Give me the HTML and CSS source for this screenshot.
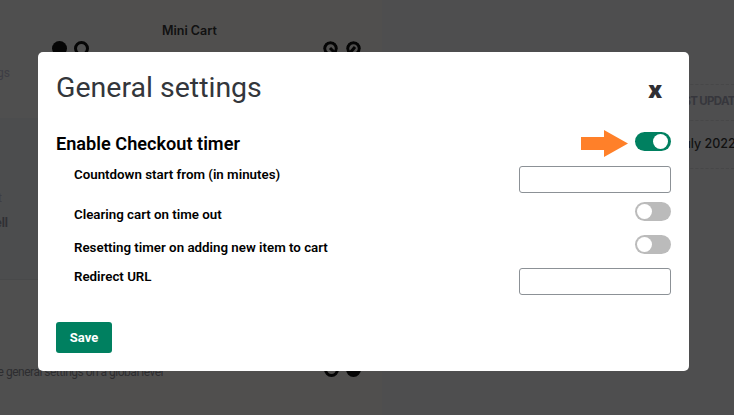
FILE: index.html
```html
<!DOCTYPE html>
<html lang="en">
<head>
<meta charset="utf-8">
<title>General settings</title>
<link rel="stylesheet" href="styles.css">
</head>
<body>
<div class="page">
  <div class="backdrop">
    <aside class="side">
      <div class="side-top">
        <div class="side-text side-first"><span>Settings</span></div>
      </div>
      <div class="side-mid">
        <div class="side-text side-second"><span>Cart</span></div>
        <div class="side-text side-third"><span>Upsell</span></div>
      </div>
    </aside>
    <main class="center">
      <div class="cart-head">
        <div class="cart-dots">
          <span class="dot solid"></span>
          <span class="dot ring"></span>
        </div>
        <div class="cart-title">Mini Cart</div>
        <div class="cart-dots cart-dots-right">
          <svg class="dot" viewBox="0 0 15 15"><circle cx="7.500" cy="7.500" r="5.800" fill="none" stroke="#050505" stroke-width="3"/><path d="M7 7l6 6" stroke="#050505" stroke-width="3" fill="none"/></svg>
          <svg class="dot" viewBox="0 0 15 15"><circle cx="7.500" cy="7.500" r="5.800" fill="none" stroke="#050505" stroke-width="3"/><path d="M9 6l-6 7" stroke="#050505" stroke-width="3" fill="none"/></svg>
        </div>
      </div>
      <div class="cart-foot">
        <div class="foot-text"><span>Manage the general settings on a global level</span></div>
        <div class="cart-dots foot-dots">
          <span class="dot ring"></span>
          <span class="dot solid"></span>
        </div>
      </div>
    </main>
    <section class="info">
      <div class="info-row info-head">LAST UPDATED</div>
      <div class="info-row info-date">July 2022</div>
    </section>
  </div>

  <div class="modal">
    <header class="modal-head">
      <h1 class="modal-title">General settings</h1>
      <span class="modal-close">x</span>
    </header>
    <div class="main-row">
      <span class="main-label">Enable Checkout timer</span>
      <div class="main-control">
        <svg class="arrow" width="47" height="27" viewBox="0 0 47 27"><path d="M0 7H23V0L47 13.500 23 27V20H0Z" fill="#ff8029"/></svg>
        <span class="switch on"></span>
      </div>
    </div>
    <div class="rows">
      <div class="row row-one">
        <span class="row-label">Countdown start from (in minutes)</span>
        <input class="field" type="text">
      </div>
      <div class="row row-two">
        <span class="row-label">Clearing cart on time out</span>
        <span class="switch"></span>
      </div>
      <div class="row row-three">
        <span class="row-label">Resetting timer on adding new item to cart</span>
        <span class="switch"></span>
      </div>
      <div class="row row-four">
        <span class="row-label">Redirect URL</span>
        <input class="field" type="text">
      </div>
    </div>
    <button class="save" type="button">Save</button>
  </div>
</div>
</body>
</html>
```
FILE: styles.css
```css
* { box-sizing: border-box; }
html, body { margin: 0; padding: 0; }
body { font-family: Roboto, sans-serif; background: #4f4f4f; }

.page {
  position: relative;
  width: 734px;
  height: 415px;
  overflow: hidden;
  background: #4f4f4f;
}

/* dimmed page behind the dialog */
.backdrop {
  display: flex;
  height: 415px;
  font-family: Inter, sans-serif;
  color: #111;
}
.side {
  width: 110px;
  flex: none;
  background: #4f4f4f;
}
.side-top { height: 118px; padding-top: 65px; }
.side-mid {
  height: 162px;
  padding-top: 72px;
  background: #4c4d4e;
  border-bottom: 1px solid #48494a;
}
.side-text {
  display: flex;
  justify-content: flex-end;
  overflow: hidden;
  white-space: nowrap;
  font-family: Roboto, sans-serif;
  font-size: 12px;
  line-height: 16px;
}
.side-first { width: 10px; color: #3d3d44; }
.side-second { width: 2px; color: #3d3d44; }
.side-third { width: 8px; margin-top: 9px; font-weight: 700; color: #303034; }

.center {
  width: 272px;
  flex: none;
  display: flex;
  flex-direction: column;
  justify-content: space-between;
  background: #504f4e;
}
.cart-head { display: flex; padding-top: 23px; margin-left: -58px; }
.cart-dots { display: flex; gap: 7px; }
.cart-head > .cart-dots { margin-top: 18px; }
.cart-title {
  margin-left: 73px;
  font-size: 12.500px;
  line-height: 16px;
  font-weight: 600;
  white-space: nowrap;
}
.cart-head > .cart-dots-right { margin-left: 106px; gap: 8px; }
.dot { display: block; width: 15px; height: 15px; border-radius: 50%; flex: none; }
.solid { background: #050505; }
.ring { border: 3px solid #050505; }

.cart-foot { display: flex; height: 53px; margin-left: -110px; }
.foot-text {
  width: 163px;
  height: 16px;
  margin-top: 2px;
  display: flex;
  justify-content: flex-end;
  overflow: hidden;
  white-space: nowrap;
  font-family: Roboto, sans-serif;
  font-size: 12px;
  line-height: 16px;
  letter-spacing: -0.5px;
  color: #2d2d30;
  flex: none;
}
.foot-dots { margin-left: 161px; }

.info { flex: 1; padding-top: 84px; background: #4e4e4f; overflow: hidden; }
.info-row {
  margin-left: 288px;
  white-space: nowrap;
  display: flex;
  align-items: center;
  border-top: 1px dashed #474748;
}
.info-head {
  height: 36px;
  padding-bottom: 3px;
  font-size: 11.500px;
  font-weight: 700;
  letter-spacing: -0.7px;
  color: #36363c;
}
.info-date {
  height: 49px;
  padding: 0 0 2px 6px;
  font-size: 12.500px;
  font-weight: 500;
  border-bottom: 1px dashed #474748;
}

/* dialog */
.modal {
  position: absolute;
  left: 38px;
  top: 52px;
  width: 651px;
  height: 319px;
  padding: 0 18px;
  background: #fff;
  border-radius: 5px;
  color: #000;
}
.modal-head {
  display: flex;
  justify-content: space-between;
  align-items: flex-start;
  height: 69px;
}
.modal-title {
  margin: 16px 0 0;
  font-size: 28.500px;
  line-height: 40px;
  font-weight: 400;
  color: #33363b;
}
.modal-close {
  margin: 22px 9px 0 0;
  font-family: "Noto Sans", sans-serif;
  font-size: 22px;
  line-height: 30px;
  font-weight: 900;
  color: #2f2f33;
}
.main-row {
  display: flex;
  justify-content: space-between;
  align-items: center;
  height: 45px;
}
.main-label { font-size: 18.150px; font-weight: 600; }
.main-control { display: flex; align-items: center; gap: 7px; }
.arrow { display: block; }
.switch {
  position: relative;
  display: block;
  width: 36px;
  height: 19px;
  border-radius: 10px;
  background: #bbb;
  flex: none;
}
.main-control .switch { margin-bottom: 5px; }
.switch::after {
  content: "";
  position: absolute;
  top: 2px;
  left: 2px;
  width: 15px;
  height: 15px;
  border-radius: 50%;
  background: #fff;
}
.switch.on { background: #008060; }
.switch.on::after { left: 18px; }

.rows { display: flex; flex-direction: column; }
.row {
  display: flex;
  justify-content: space-between;
  align-items: flex-start;
  padding-left: 18px;
}
.row-label { font-size: 13.320px; line-height: 18px; font-weight: 600; }
.row-one { height: 36px; }
.row-two { height: 33px; }
.row-three { height: 33px; }
.row-four { height: 40px; }
.row-two .row-label { margin-top: 4px; }
.row-three .row-label { margin-top: 4px; }
.field {
  display: block;
  width: 152px;
  height: 27px;
  padding: 0 8px;
  border: 1px solid #8c9196;
  border-radius: 3px;
  background: #fff;
}
.save {
  display: block;
  width: 56px;
  height: 31px;
  margin-top: 14px;
  border: 0;
  border-radius: 3px;
  background: #008060;
  color: #fff;
  font-family: Roboto, sans-serif;
  font-size: 13px;
  font-weight: 700;
}
```
